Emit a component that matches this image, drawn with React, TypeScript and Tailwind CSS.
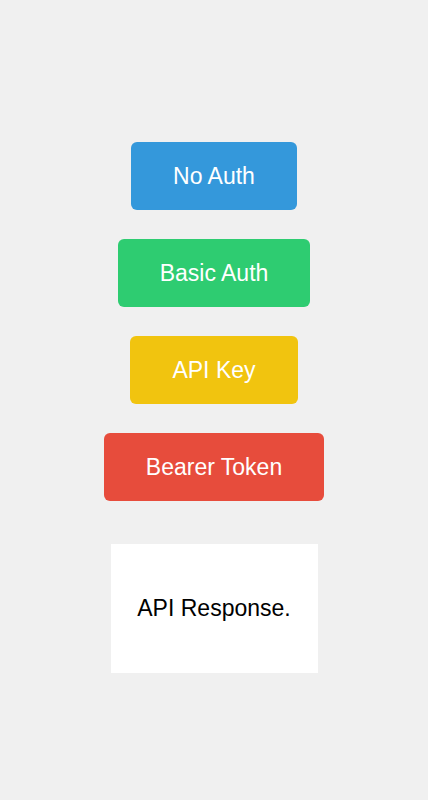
export default function App() {
  const btn = "h-[68px] px-[42px] rounded-[6px] text-white text-[23px] leading-[28px] flex items-center justify-center";
  return (
    <div className="min-h-[800px] w-full bg-[#f0f0f0] flex flex-col items-center pt-[142px]" style={{ fontFamily: '"Liberation Sans", Arial, sans-serif' }}>
      <div className="flex flex-col items-center gap-[29px]">
        <button className={`${btn} bg-[#3498db]`}>No Auth</button>
        <button className={`${btn} bg-[#2ecc71]`}>Basic Auth</button>
        <button className={`${btn} bg-[#f1c40f]`}>API Key</button>
        <button className={`${btn} bg-[#e74c3c]`}>Bearer Token</button>
      </div>
      <div className="mt-[43px] w-[207px] h-[129px] bg-white flex items-center justify-center text-black text-[23px]">
        API Response.
      </div>
    </div>
  );
}
